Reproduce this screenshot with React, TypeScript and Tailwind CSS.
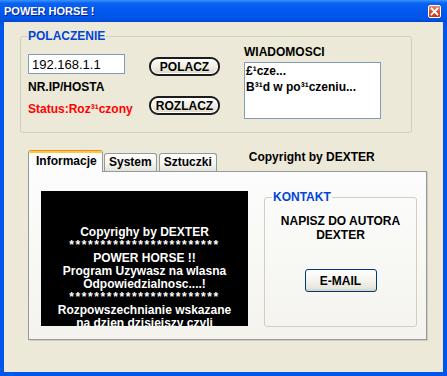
const Pill = ({ label }: { label: string }) => (
  <button className="flex h-[19px] w-[71px] items-center justify-center rounded-[9px] border-2 border-[#1c1c1c] bg-[linear-gradient(180deg,#FDFCF8_0%,#EFEDE3_55%,#DCD8C6_100%)] text-[12px] font-bold leading-none text-black shadow-[inset_0_0_0_1px_#ffffff]">
    {label}
  </button>
)

const Tab = ({ label, active }: { label: string; active?: boolean }) =>
  active ? (
    <div className="relative z-10 -mb-[1px] flex h-[22px] w-[75px] flex-col overflow-hidden rounded-t-[3px] border-x border-[#919B9C] bg-[#FCFCFE]">
      <div className="h-[1px] bg-[#E68B2C]" />
      <div className="h-[2px] bg-[#FFC73C]" />
      <span className="pl-[7px] pt-[1px] text-[12px] font-bold leading-[14px] text-black">{label}</span>
    </div>
  ) : (
    <div className="flex h-[18px] items-start rounded-t-[3px] border-x border-t border-[#919B9C] bg-[linear-gradient(180deg,#FFFFFF_0%,#F3F3EF_60%,#E3E1D8_100%)] px-[4px] pt-[1px] text-[12px] font-bold leading-[14px] text-black">
      {label}
    </div>
  )

export default function App() {
  return (
    <div className="flex h-[376px] w-[447px] flex-col bg-[#0055EA] font-['Liberation_Sans',Arial,sans-serif]">
      {/* title bar */}
      <div className="flex h-[22px] items-center justify-between bg-[linear-gradient(180deg,#3C95FF_0%,#0A63F0_14%,#0058EE_50%,#0054E8_85%,#0046D0_100%)] pl-[4px] pr-[6px]">
        <span className="text-[11px] font-bold text-white [text-shadow:1px_1px_0_#0A1E8C]">POWER HORSE !</span>
        <div className="flex h-[13px] w-[13px] items-center justify-center rounded-[2px] border border-white bg-[linear-gradient(180deg,#E9876B_0%,#D94A25_60%,#C13A14_100%)]">
          <svg width="9" height="9" viewBox="0 0 9 9">
            <path d="M1.5 1.5 L7.5 7.5 M7.5 1.5 L1.5 7.5" stroke="#fff" strokeWidth="1.8" strokeLinecap="square" />
          </svg>
        </div>
      </div>

      {/* client */}
      <div className="mx-[4px] mb-[4px] flex flex-1 flex-col bg-[#ECE9D8] text-black">
        {/* POLACZENIE */}
        <div className="relative ml-[16px] mt-[14px] flex h-[97px] w-[392px] rounded-[3px] border border-[#D0D0BF]">
          <span className="absolute -top-[8px] left-[6px] bg-[#ECE9D8] px-[1px] text-[12px] font-bold leading-[14px] text-[#0046D5]">
            POLACZENIE
          </span>
          <div className="flex w-[128px] flex-col pl-[7px] pt-[17px]">
            <div className="flex h-[20px] w-[97px] items-center border border-[#7F9DB9] bg-white pl-[3px] text-[13px] leading-none">
              192.168.1.1
            </div>
            <span className="mt-[6px] text-[12px] font-bold leading-[14px]">NR.IP/HOSTA</span>
            <span className="mt-[8px] text-[12px] font-bold leading-[14px] text-[#FF0000]">Status:Roz³¹czony</span>
          </div>
          <div className="flex w-[95px] flex-col pt-[20px]">
            <Pill label="POLACZ" />
            <div className="mt-[20px]">
              <Pill label="ROZLACZ" />
            </div>
          </div>
          <div className="flex flex-col pt-[8px]">
            <span className="text-[12px] font-bold leading-[14px]">WIADOMOSCI</span>
            <div className="mt-[3px] h-[57px] w-[137px] border border-[#7F9DB9] bg-white pl-[1px] text-[12px] font-bold leading-[16px]">
              <div>£¹cze...</div>
              <div>B³¹d w po³¹czeniu...</div>
            </div>
          </div>
        </div>

        {/* tabs */}
        <div className="ml-[24px] mt-[17px] flex h-[21px] items-end">
          <Tab label="Informacje" active />
          <div className="ml-[1px]">
            <Tab label="System" />
          </div>
          <div className="ml-[2px]">
            <Tab label="Sztuczki" />
          </div>
          <span className="ml-[32px] self-start text-[12px] font-bold leading-[14px]">Copyright by DEXTER</span>
        </div>
        <div className="ml-[24px] flex h-[169px] w-[399px] border border-[#919B9C] bg-[linear-gradient(180deg,#FCFCFE_0%,#F9F9F6_40%,#F4F3EE_100%)] shadow-[1px_1px_0_#D0CEBF]">
          <div className="ml-[12px] mt-[19px] h-[135px] w-[207px] overflow-hidden bg-black pt-[35px] text-center text-[12px] font-bold leading-[13px] text-white">
            <div>Copyrighy by DEXTER</div>
            <div className="tracking-[1.6px]">************************</div>
            <div>POWER HORSE !!</div>
            <div>Program Uzywasz na wlasna</div>
            <div>Odpowiedzialnosc....!</div>
            <div className="tracking-[1.6px]">************************</div>
            <div>Rozpowszechnianie wskazane</div>
            <div>na dzien dzisiejszy czyli</div>
          </div>
          <div className="relative ml-[16px] mt-[25px] flex h-[130px] w-[153px] flex-col items-center rounded-[3px] border border-[#D0D0BF]">
            <span className="absolute -top-[8px] left-[7px] bg-[#FBFBFA] px-[1px] text-[12px] font-bold leading-[14px] text-[#0046D5]">
              KONTAKT
            </span>
            <span className="mt-[16px] text-[12px] font-bold leading-[14px]">NAPISZ DO AUTORA</span>
            <span className="text-[12px] font-bold leading-[14px]">DEXTER</span>
            <button className="mt-[27px] flex h-[23px] w-[72px] items-center justify-center rounded-[3px] border border-[#003C74] bg-[linear-gradient(180deg,#FFFFFF_0%,#F4F3EE_50%,#E8E6DC_85%,#D6D0C5_100%)] text-[12px] font-bold leading-none">
              E-MAIL
            </button>
          </div>
        </div>
      </div>
    </div>
  )
}
